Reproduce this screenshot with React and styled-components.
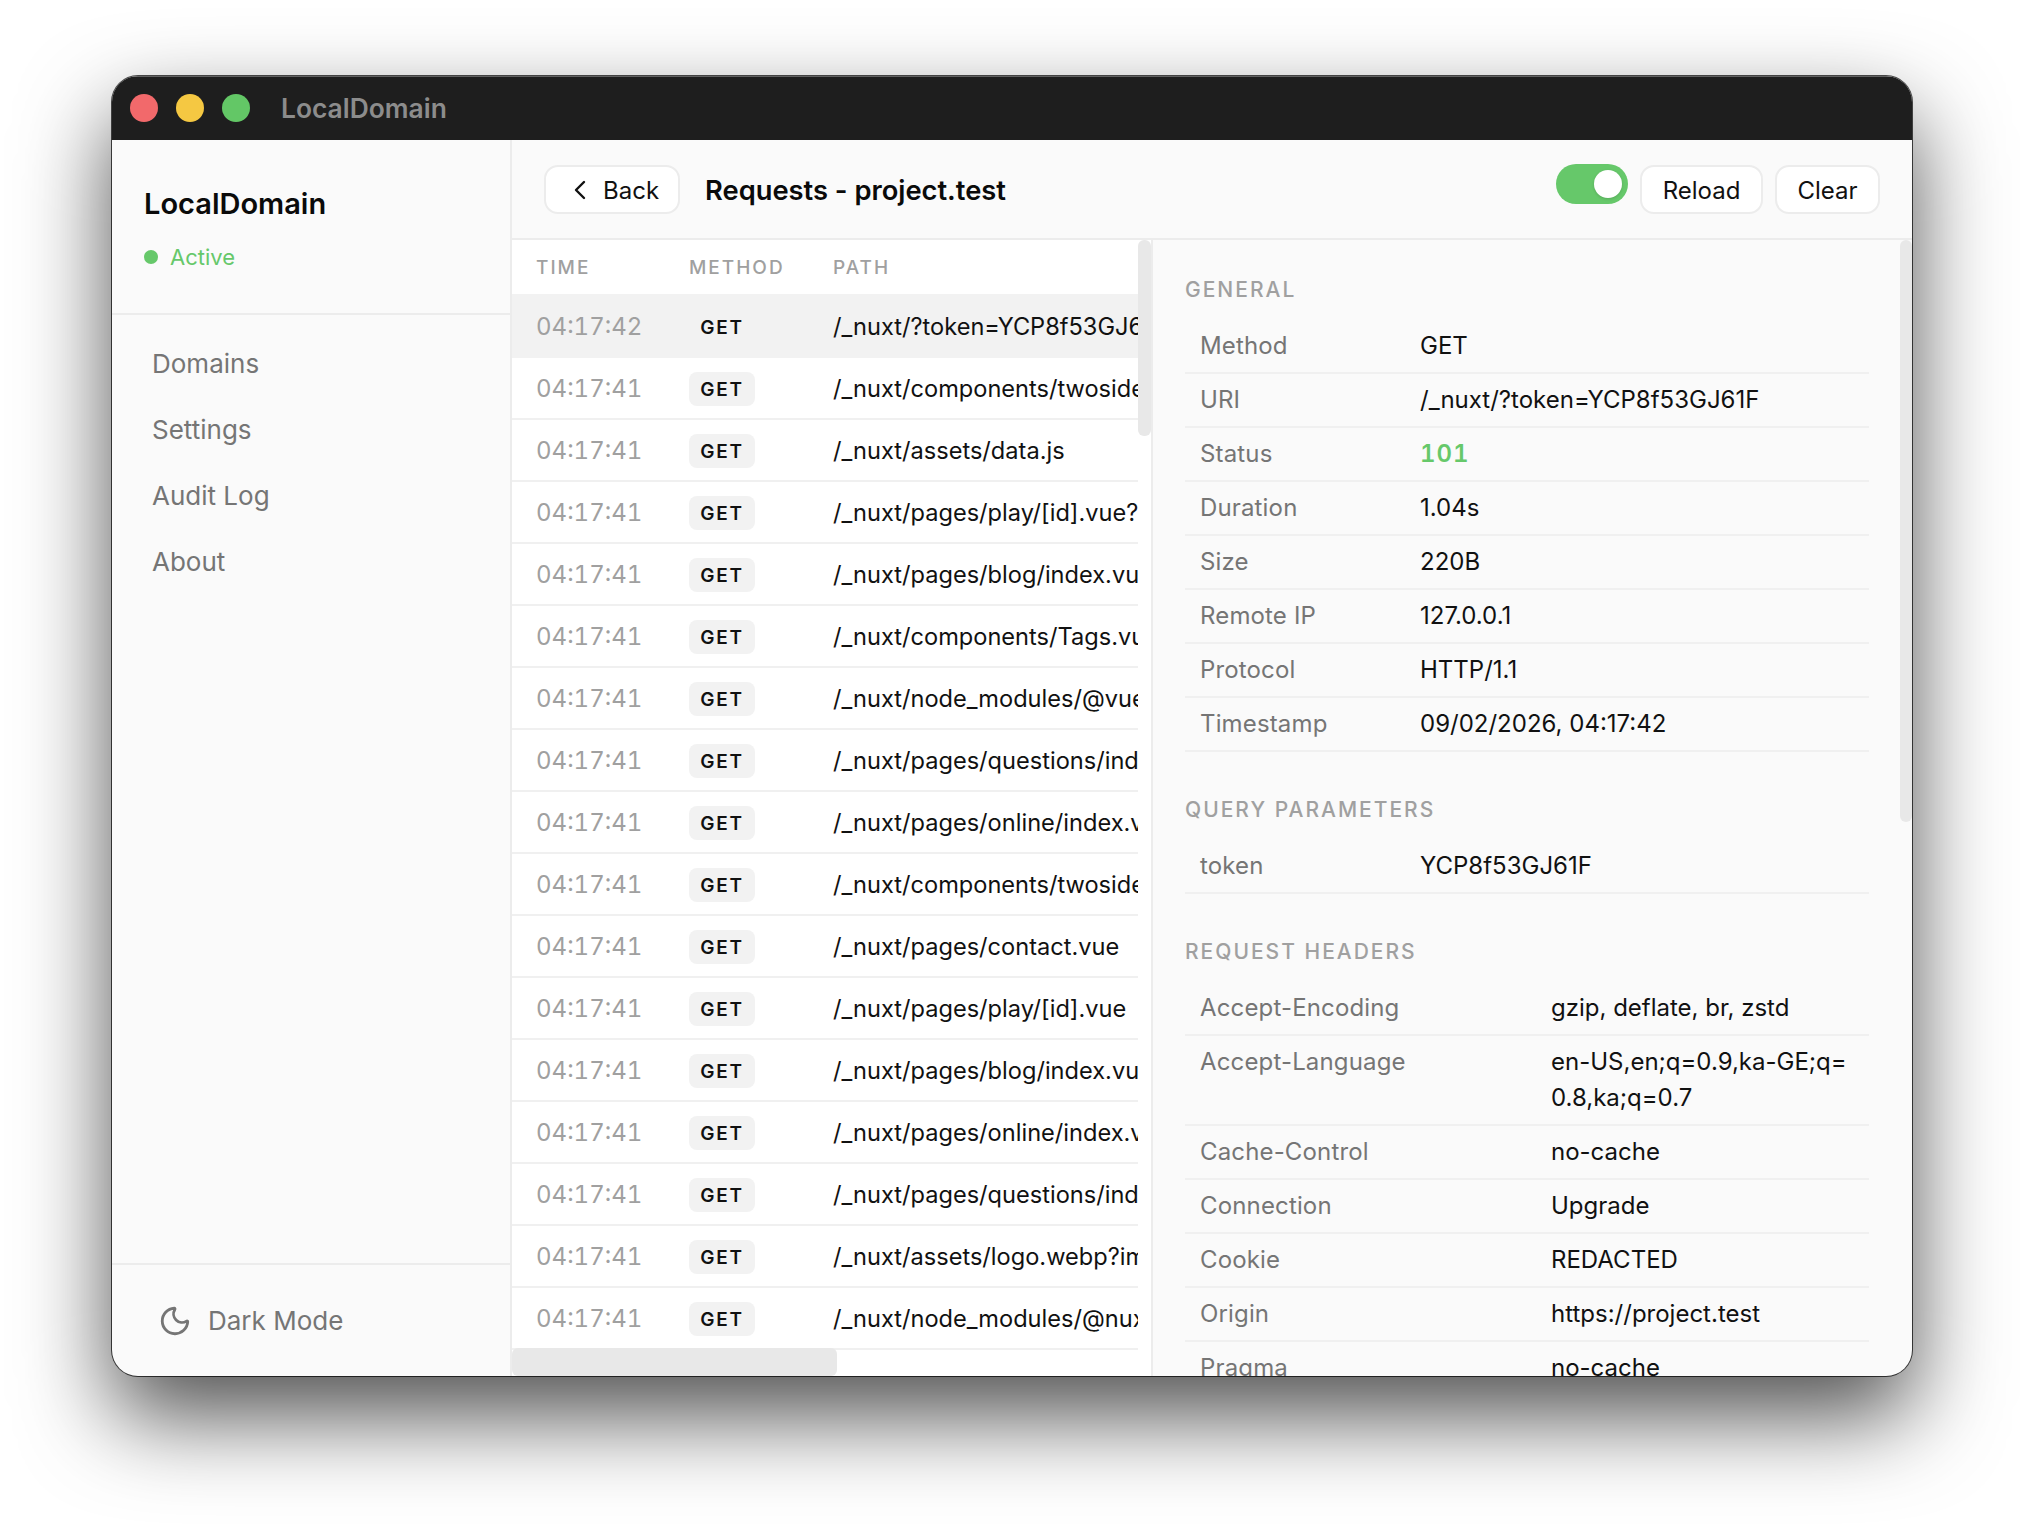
import React from 'react';
import styled, { createGlobalStyle } from 'styled-components';
import { ChevronLeft, Moon } from 'lucide-react';

const GlobalStyle = createGlobalStyle`
  * { box-sizing: border-box; }
  body { margin: 0; background: #fff; font-family: Inter, "Liberation Sans", sans-serif; }
`;

const Stage = styled.div`
  width: 2024px;
  height: 1524px;
  padding: 76px 112px 0;
  overflow: hidden;
`;
const Window = styled.div`
  width: 1800px;
  height: 1300px;
  display: flex;
  flex-direction: column;
  border-radius: 26px;
  overflow: hidden;
  background: #fafafa;
  box-shadow: 0 0 0 1px rgba(0, 0, 0, 0.7), 0 40px 90px rgba(0, 0, 0, 0.69);
`;
const TitleBar = styled.div`
  height: 64px;
  flex: none;
  display: flex;
  align-items: center;
  padding: 0 18px;
  background: #1e1e1e;
  box-shadow: inset 0 1px 0 rgba(255, 255, 255, 0.3);
`;
const Light = styled.span`
  width: 28px;
  height: 28px;
  border-radius: 50%;
  margin-right: 18px;
  background: ${p => p.$color};
`;
const WindowTitle = styled.span`
  margin-left: 13px;
  font-size: 26.4px;
  font-weight: 600;
  color: #8c8c8c;
`;
const Body = styled.div`
  flex: 1;
  min-height: 0;
  display: flex;
`;
const Sidebar = styled.aside`
  width: 400px;
  flex: none;
  display: flex;
  flex-direction: column;
  border-right: 2px solid #ececec;
`;
const SideHead = styled.div`
  padding: 42px 32px 40px;
  border-bottom: 2px solid #ececec;
`;
const Brand = styled.div`
  font-size: 29px;
  line-height: 44px;
  font-weight: 600;
  color: #0a0a0a;
`;
const Status = styled.div`
  margin-top: 15px;
  display: flex;
  align-items: center;
  gap: 12px;
  font-size: 22px;
  line-height: 32px;
  color: #66c86a;
`;
const StatusDot = styled.span`
  width: 14px;
  height: 14px;
  border-radius: 50%;
  background: #66c86a;
`;
const Nav = styled.nav`
  flex: 1;
  padding: 15px 16px;
`;
const NavItem = styled.div`
  height: 66px;
  padding: 0 24px;
  display: flex;
  align-items: center;
  font-size: 26px;
  color: #757575;
`;
const SideFoot = styled.div`
  height: 113px;
  flex: none;
  display: flex;
  align-items: center;
  gap: 16px;
  padding-left: 46px;
  border-top: 2px solid #ececec;
  font-size: 26px;
  color: #757575;
`;
const Main = styled.main`
  flex: 1;
  min-width: 0;
  display: flex;
  flex-direction: column;
`;
const Header = styled.header`
  height: 100px;
  flex: none;
  display: flex;
  align-items: center;
  padding: 0 32px;
  border-bottom: 2px solid #ececec;
`;
const Button = styled.button`
  height: 49px;
  display: flex;
  align-items: center;
  padding: ${p => (p.$back ? '2px 19px 0 18px' : '2px 20.5px 0')};
  gap: 7px;
  background: #fff;
  border: 2px solid #ececec;
  border-radius: 14px;
  font-family: inherit;
  font-size: 24px;
  color: #111;
`;
const PageTitle = styled.h1`
  margin: 2px 0 0 25px;
  flex: 1;
  font-size: 27.3px;
  font-weight: 600;
  color: #0a0a0a;
`;
const Toggle = styled.div`
  width: 72px;
  height: 40px;
  margin: 0 12px 10px 0;
  padding: 6px;
  display: flex;
  justify-content: flex-end;
  border-radius: 20px;
  background: #66c86a;
`;
const Knob = styled.span`
  width: 28px;
  height: 28px;
  border-radius: 50%;
  background: #fff;
  box-shadow: 0 1px 3px rgba(0, 0, 0, 0.15);
`;
const ClearButton = styled(Button)`
  margin-left: 12px;
`;
const Panes = styled.div`
  flex: 1;
  min-height: 0;
  display: flex;
`;
const ListPane = styled.section`
  position: relative;
  width: 641px;
  flex: none;
  padding-right: 13px;
  overflow: hidden;
  background: #fff;
  border-right: 2px solid #ececec;
`;
const ListHead = styled.div`
  height: 54px;
  display: grid;
  grid-template-columns: 153px 144px 1fr;
  align-items: center;
  padding-left: 24px;
  font-size: 19px;
  font-weight: 500;
  letter-spacing: 2px;
  color: #a0a0a0;
`;
const Row = styled.div`
  height: ${p => (p.$selected ? 64 : 62)}px;
  display: grid;
  grid-template-columns: 153px 144px 1fr;
  align-items: center;
  padding-left: 24px;
  border-bottom: ${p => (p.$selected ? 'none' : '2px solid #f0f0f0')};
  background: ${p => (p.$selected ? '#f2f2f2' : '#fff')};
`;
const Time = styled.span`
  font-size: 24px;
  font-variant-numeric: tabular-nums;
  color: #a0a0a0;
`;
const Badge = styled.span`
  width: 66px;
  height: 34px;
  margin-top: 2px;
  display: flex;
  align-items: center;
  justify-content: center;
  border-radius: 8px;
  background: #f2f2f2;
  font-size: 19px;
  font-weight: 600;
  letter-spacing: 1.7px;
  color: #111;
`;
const Path = styled.span`
  font-size: 23.6px;
  white-space: nowrap;
  overflow: hidden;
  color: #111;
`;
const VScroll = styled.div`
  position: absolute;
  top: 0;
  right: 0;
  width: 13px;
  height: 196px;
  border-radius: 6px;
  background: #e8e8e8;
`;
const HScroll = styled.div`
  position: absolute;
  left: 0;
  bottom: 0;
  width: 325px;
  height: 28px;
  border-radius: 6px;
  background: #e8e8e8;
`;
const DetailPane = styled.section`
  position: relative;
  flex: 1;
  min-width: 0;
  overflow: hidden;
  padding: 36px 43px 0 32px;
`;
const DetailScroll = styled.div`
  position: absolute;
  top: 0;
  right: 0;
  width: 12px;
  height: 582px;
  border-radius: 6px;
  background: #e8e8e8;
`;
const Section = styled.div`
  margin-bottom: 44px;
`;
const SectionTitle = styled.h2`
  margin: 0 0 16px;
  font-size: 21px;
  line-height: 28px;
  font-weight: 500;
  letter-spacing: 2px;
  color: #a0a0a0;
`;
const DetailRow = styled.div`
  display: grid;
  grid-template-columns: ${p => p.$labelWidth}px 1fr;
  padding: 8px 15px;
  border-bottom: 2px solid #f0f0f0;
  font-size: 24px;
  line-height: 36px;
`;
const Label = styled.span`
  letter-spacing: 0.15px;
  color: #757575;
`;
const Value = styled.span`
  word-break: break-all;
  color: ${p => (p.$ok ? '#66c86a' : '#111')};
  font-weight: ${p => (p.$ok ? 600 : 400)};
  letter-spacing: ${p => (p.$ok ? '1px' : '0')};
  font-variant-numeric: ${p => (p.$ok ? 'tabular-nums' : 'normal')};
`;

const paths = [
  ['04:17:42', '/_nuxt/?token=YCP8f53GJ61F'],
  ['04:17:41', '/_nuxt/components/twosided/Card.vue'],
  ['04:17:41', '/_nuxt/assets/data.js'],
  ['04:17:41', '/_nuxt/pages/play/[id].vue?macro=true'],
  ['04:17:41', '/_nuxt/pages/blog/index.vue?macro=true'],
  ['04:17:41', '/_nuxt/components/Tags.vue'],
  ['04:17:41', '/_nuxt/node_modules/@vue/shared.js'],
  ['04:17:41', '/_nuxt/pages/questions/index.vue'],
  ['04:17:41', '/_nuxt/pages/online/index.vue'],
  ['04:17:41', '/_nuxt/components/twosided/List.vue'],
  ['04:17:41', '/_nuxt/pages/contact.vue'],
  ['04:17:41', '/_nuxt/pages/play/[id].vue'],
  ['04:17:41', '/_nuxt/pages/blog/index.vue'],
  ['04:17:41', '/_nuxt/pages/online/index.vue'],
  ['04:17:41', '/_nuxt/pages/questions/index.vue'],
  ['04:17:41', '/_nuxt/assets/logo.webp?import'],
  ['04:17:41', '/_nuxt/node_modules/@nuxt/ui.js'],
];

const general = [
  ['Method', 'GET'],
  ['URI', '/_nuxt/?token=YCP8f53GJ61F'],
  ['Status', '101', true],
  ['Duration', '1.04s'],
  ['Size', '220B'],
  ['Remote IP', '127.0.0.1'],
  ['Protocol', 'HTTP/1.1'],
  ['Timestamp', '09/02/2026, 04:17:42'],
];

const headers = [
  ['Accept-Encoding', 'gzip, deflate, br, zstd'],
  ['Accept-Language', 'en-US,en;q=0.9,ka-GE;q=0.8,ka;q=0.7'],
  ['Cache-Control', 'no-cache'],
  ['Connection', 'Upgrade'],
  ['Cookie', 'REDACTED'],
  ['Origin', 'https://project.test'],
  ['Pragma', 'no-cache'],
];

const Details = ({ title, rows, labelWidth }) => (
  <Section>
    <SectionTitle>{title}</SectionTitle>
    {rows.map(([label, value, ok]) => (
      <DetailRow key={label} $labelWidth={labelWidth}>
        <Label>{label}</Label>
        <Value $ok={ok}>{value}</Value>
      </DetailRow>
    ))}
  </Section>
);

export default function App() {
  return (
    <Stage>
      <GlobalStyle />
      <Window>
        <TitleBar>
          <Light $color="#f2696b" />
          <Light $color="#f5c842" />
          <Light $color="#63c766" />
          <WindowTitle>LocalDomain</WindowTitle>
        </TitleBar>
        <Body>
          <Sidebar>
            <SideHead>
              <Brand>LocalDomain</Brand>
              <Status><StatusDot />Active</Status>
            </SideHead>
            <Nav>
              {['Domains', 'Settings', 'Audit Log', 'About'].map(item => (
                <NavItem key={item}>{item}</NavItem>
              ))}
            </Nav>
            <SideFoot>
              <Moon size={34} strokeWidth={2} color="#757575" />
              Dark Mode
            </SideFoot>
          </Sidebar>
          <Main>
            <Header>
              <Button $back><ChevronLeft size={32} strokeWidth={1.8} />Back</Button>
              <PageTitle>Requests - project.test</PageTitle>
              <Toggle><Knob /></Toggle>
              <Button>Reload</Button>
              <ClearButton>Clear</ClearButton>
            </Header>
            <Panes>
              <ListPane>
                <ListHead><span>TIME</span><span>METHOD</span><span>PATH</span></ListHead>
                {paths.map(([time, path], i) => (
                  <Row key={i} $selected={i === 0}>
                    <Time>{time}</Time>
                    <Badge>GET</Badge>
                    <Path>{path}</Path>
                  </Row>
                ))}
                <VScroll />
                <HScroll />
              </ListPane>
              <DetailPane>
                <Details title="GENERAL" rows={general} labelWidth={220} />
                <Details title="QUERY PARAMETERS" rows={[['token', 'YCP8f53GJ61F']]} labelWidth={220} />
                <Details title="REQUEST HEADERS" rows={headers} labelWidth={351} />
                <DetailScroll />
              </DetailPane>
            </Panes>
          </Main>
        </Body>
      </Window>
    </Stage>
  );
}
